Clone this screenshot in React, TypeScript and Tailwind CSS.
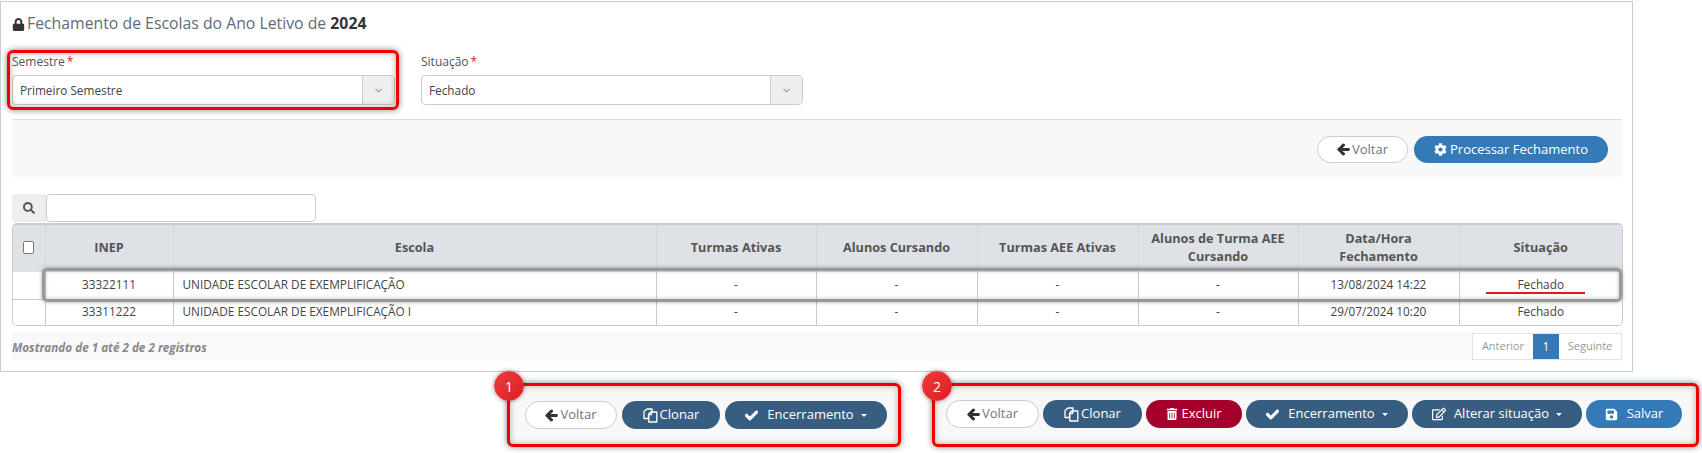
import React from "react";
import { FaLock, FaArrowLeft, FaCog, FaSearch, FaCheck, FaRegEdit, FaSave, FaTrashAlt } from "react-icons/fa";
import { ChevronDown } from "lucide-react";

function CopyIcon() {
  return (
    <svg width="15" height="15" viewBox="0 0 15 15" fill="none" stroke="currentColor" strokeWidth="1.3" className="shrink-0">
      <path d="M1 3.5 V10.5 H5.5 V6.5 L7.5 4 H9 V1 H4 L1 3.5 Z" strokeLinejoin="round" />
      <path d="M8.5 4 H13.8 V14 H5.8 V6.5 H8.5 V4" strokeLinejoin="round" />
    </svg>
  );
}

function Caret() {
  return <span className="ml-[7px] inline-block w-0 h-0 border-x-[3px] border-x-transparent border-t-[3px] border-t-white" />;
}

function Btn({ w, color, children, h = "h-[28px]" }: { w: string; color: string; children: React.ReactNode; h?: string }) {
  return <button className={`inline-flex items-center justify-center rounded-full text-[13px] shrink-0 ${w} ${h} ${color}`}>{children}</button>;
}

const outline = "bg-white border border-[#ccc] text-[#6b7785]";
const navy = "bg-[#375d81] text-white";

function Voltar({ w, h }: { w: string; h?: string }) {
  return (
    <Btn w={w} h={h} color={outline}>
      <FaArrowLeft stroke="currentColor" strokeWidth={40} className="text-[#333] text-[13px] mr-[2px]" />
      Voltar
    </Btn>
  );
}

function Clonar({ w }: { w: string }) {
  return (
    <Btn w={w} color={navy}>
      <span className="mr-[2px]"><CopyIcon /></span>
      Clonar
    </Btn>
  );
}

function Encerramento() {
  return (
    <Btn w="w-[162px]" color={navy}>
      <FaCheck stroke="currentColor" strokeWidth={30} className="text-[13px] mr-[9px]" />
      Encerramento
      <Caret />
    </Btn>
  );
}

function SelectField({ label, value, w }: { label: string; value: string; w: string }) {
  return (
    <div className={w}>
      <div className="text-[12px] leading-[18px] text-[#555] mb-[4px]">
        {label}<span className="text-[#e02020] ml-[2px]">*</span>
      </div>
      <div className="flex h-[30px] border border-[#ccc] rounded-[4px] overflow-hidden">
        <div className="flex-1 pl-[7px] text-[11.8px] leading-[29px] text-[#444]">{value}</div>
        <div className="w-[32px] bg-[#eee] border-l border-[#ccc] flex items-center justify-center">
          <ChevronDown size={11} strokeWidth={1.75} className="text-[#555]" />
        </div>
      </div>
    </div>
  );
}

const headers: React.ReactNode[] = [
  "INEP",
  "Escola",
  "Turmas Ativas",
  "Alunos Cursando",
  "Turmas AEE Ativas",
  <>Alunos de Turma AEE<br />Cursando</>,
  <>Data/Hora<br />Fechamento</>,
  "Situação",
];
const rows = [
  ["33322111", "UNIDADE ESCOLAR DE EXEMPLIFICAÇÃO", "-", "-", "-", "-", "13/08/2024 14:22", "Fechado"],
  ["33311222", "UNIDADE ESCOLAR DE EXEMPLIFICAÇÃO I", "-", "-", "-", "-", "29/07/2024 10:20", "Fechado"],
];

function Badge({ n, pos }: { n: string; pos: string }) {
  return (
    <div className={`absolute w-[30px] h-[30px] rounded-full bg-gradient-to-br from-[#ee3a3a] to-[#d81f24] border border-[#ff2a2a] shadow-[0_0_4px_rgba(0,0,0,0.45)] text-white text-[14px] flex items-center justify-center ${pos}`}>
      {n}
    </div>
  );
}

export default function App() {
  return (
    <div className="relative w-[1702px] h-[453px] overflow-hidden bg-white pt-px" style={{ fontFamily: '"Open Sans", sans-serif' }}>
      <div className="w-[1633px] border border-[#ccc] pt-[10px] pl-[11px] pr-[10px] pb-[10px]">
        <h1 className="flex items-center h-[24px] text-[15.8px] font-normal text-[#5f6b78] mb-[17px]">
          <FaLock className="text-[#333] text-[13px] mr-[2px]" />
          <span>Fechamento de Escolas do Ano Letivo de <b className="font-bold text-[#333]">2024</b></span>
        </h1>

        <div className="flex gap-[26px] mb-[14px]">
          <SelectField label="Semestre" value="Primeiro Semestre" w="w-[383px]" />
          <SelectField label="Situação" value="Fechado" w="w-[382px]" />
        </div>

        <div className="h-[58px] bg-[#f8f8f8] border-t border-[#ddd] flex items-center justify-end gap-[6px] pr-[14px] pt-[2px] mb-[17px]">
          <Voltar w="w-[91px]" h="h-[27px]" />
          <Btn w="w-[194px]" h="h-[27px]" color="bg-[#337ab7] text-white">
            <FaCog className="text-[13px] mr-[3px]" />
            Processar Fechamento
          </Btn>
        </div>

        <div className="flex w-[304px] h-[28px] mb-[1px]">
          <div className="w-[34px] bg-[#eee] flex items-center justify-center rounded-l-[4px]">
            <FaSearch className="text-[12px] text-[#555]" />
          </div>
          <div className="flex-1 border border-[#ccc] rounded-[4px]" />
        </div>

        <div className="w-[1611px] border border-[#ccc] border-t-2 rounded-[5px] overflow-hidden">
          <table className="w-full table-fixed border-collapse text-[11.8px] text-[#444]">
            <colgroup>
              <col className="w-[32px]" />
              <col className="w-[128px]" />
              <col className="w-[483px]" />
              <col className="w-[160px]" />
              <col className="w-[161px]" />
              <col className="w-[161px]" />
              <col className="w-[160px]" />
              <col className="w-[161px]" />
              <col />
            </colgroup>
            <thead>
              <tr className="h-[47px] bg-[#dee2e6]">
                <th className="border-r border-[#d3d7db] pb-[4px]">
                  <span className="inline-block align-middle w-[11px] h-[13px] bg-white border border-[#777] rounded-[2px]" />
                </th>
                {headers.map((h, i) => (
                  <th key={i} className={`font-bold text-[12.7px] text-[#555] leading-[18px] pb-[4px] ${i < headers.length - 1 ? "border-r border-[#d3d7db]" : ""}`}>{h}</th>
                ))}
              </tr>
            </thead>
            <tbody>
              {rows.map((r, idx) => (
                <tr key={r[0]} className={`${idx === 0 ? "h-[27px] border-b border-[#ccc]" : "h-[26px]"}`}>
                  <td className="border-r border-[#ccc]" />
                  {r.map((c, i) => (
                    <td key={i} className={`${i === 1 ? "text-left pl-[9px]" : "text-center"} ${i < r.length - 1 ? "border-r border-[#ccc]" : ""}`}>{c}</td>
                  ))}
                </tr>
              ))}
            </tbody>
          </table>
        </div>

        <div className="mt-[6px] h-[29px] bg-[#f9f9f9] flex items-center justify-between">
          <i className="text-[11.7px] font-bold text-[#888] pt-[3px]">Mostrando de 1 até 2 de 2 registros</i>
          <div className="flex h-[27px] text-[11px] border border-[#e3e3e3]">
            <span className="w-[60px] bg-white text-[#999] flex items-center justify-center">Anterior</span>
            <span className="w-[26px] bg-[#337ab7] text-white text-[12px] flex items-center justify-center">1</span>
            <span className="w-[62px] bg-white text-[#999] flex items-center justify-center">Seguinte</span>
          </div>
        </div>
      </div>

      <div className="flex mt-[11px] ml-[507px] gap-[31px]">
        <div className="w-[394px] h-[64px] bg-[#f8f8f8] border-[3px] border-[#f00000] rounded-[6px] shadow-[0_0_6px_rgba(0,0,0,0.5),inset_0_0_6px_rgba(0,0,0,0.3)] flex gap-[5px] pl-[15px] pt-[15px]">
          <Voltar w="w-[92px]" />
          <Clonar w="w-[98px]" />
          <Encerramento />
        </div>
        <div className="w-[767px] h-[64px] bg-[#f8f8f8] border-[3px] border-[#f00000] rounded-[6px] shadow-[0_0_6px_rgba(0,0,0,0.5),inset_0_0_6px_rgba(0,0,0,0.3)] flex gap-[4px] pl-[11px] pt-[14px]">
          <Voltar w="w-[93px]" />
          <Clonar w="w-[99px]" />
          <Btn w="w-[96px]" color="bg-[#a6002c] text-white">
            <FaTrashAlt className="text-[12px] mr-[3px]" />
            Excluir
          </Btn>
          <Encerramento />
          <Btn w="w-[170px]" color={navy}>
            <FaRegEdit className="text-[14px] mr-[8px]" />
            Alterar situação
            <Caret />
          </Btn>
          <Btn w="w-[96px]" color="bg-[#337ab7] text-white">
            <FaSave className="text-[13px] mr-[9px]" />
            Salvar
          </Btn>
        </div>
      </div>

      {/* annotations lying over the page */}
      <div className="absolute left-[7px] top-[50px] w-[392px] h-[60px] border-[3px] border-[#f00000] rounded-[6px] shadow-[0_0_6px_rgba(0,0,0,0.5),inset_0_0_6px_rgba(0,0,0,0.35)]" />
      <div className="absolute left-[42px] top-[268px] w-[1580px] h-[34px] border-[3px] border-[#999] rounded-[5px] shadow-[0_0_4px_rgba(0,0,0,0.35),inset_0_0_4px_rgba(0,0,0,0.25)]" />
      <div className="absolute left-[1486px] top-[292px] w-[99px] h-[2px] bg-[#e8161b]" />
      <Badge n="1" pos="left-[494px] top-[371px]" />
      <Badge n="2" pos="left-[922px] top-[371px]" />
    </div>
  );
}
